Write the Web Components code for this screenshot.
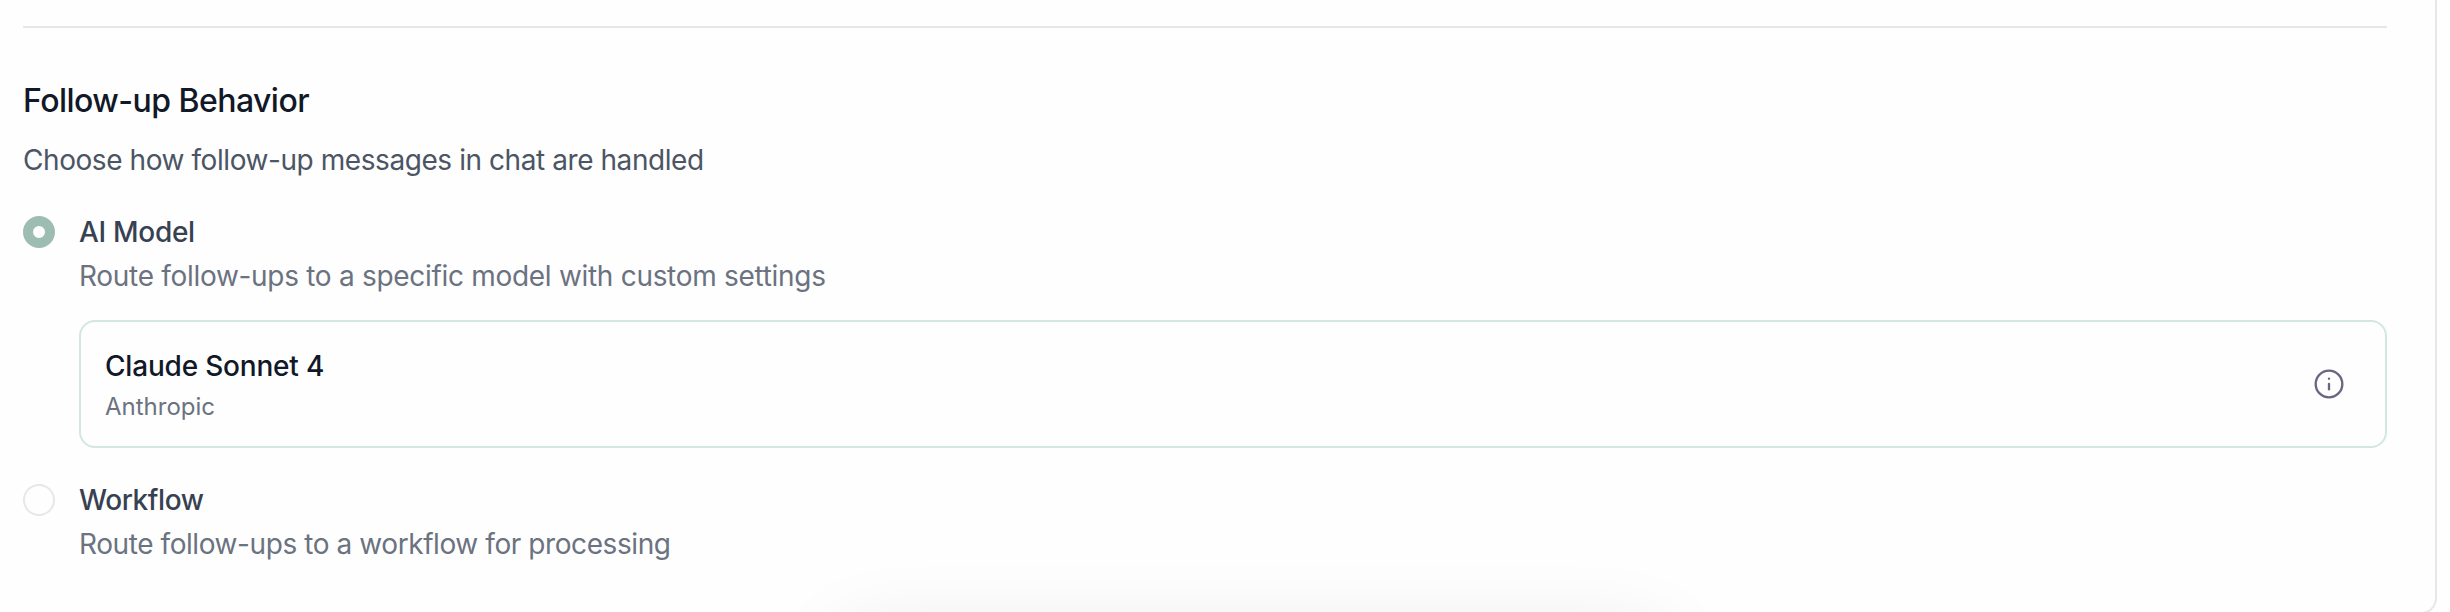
<!DOCTYPE html>
<html lang="en">
<head>
<meta charset="utf-8">
<title>Follow-up Behavior</title>
<style>
  html {
    overflow: hidden;
  }

  body {
    margin: 0;
    height: 612px;
    overflow: hidden;
    background: #fefefe;
    font-family: Inter, "Liberation Sans", sans-serif;
    --color-line: #e5e7eb;
    --color-accent: #9dbdb3;
    --color-accent-soft: #d3e6df;
    --color-title: #111827;
    --color-label: #374151;
    --color-text: #4b5563;
    --color-muted: #6b7280;
    --color-icon: #6b6584;
  }

  [data-key="model"] {
    --label-tracking: -0.3px;
    --description-tracking: -0.3px;
  }

  [data-key="workflow"] {
    --label-tracking: -0.42px;
    --description-tracking: -0.42px;
  }
</style>
</head>
<body>
<settings-panel>
  <settings-section heading="Follow-up Behavior" description="Choose how follow-up messages in chat are handled">
    <radio-option data-key="model" checked label="AI Model" description="Route follow-ups to a specific model with custom settings">
      <model-card name="Claude Sonnet 4" provider="Anthropic"></model-card>
    </radio-option>
    <radio-option data-key="workflow" label="Workflow" description="Route follow-ups to a workflow for processing"></radio-option>
  </settings-section>
</settings-panel>
<floating-shadow></floating-shadow>

<script>
class SettingsPanel extends HTMLElement {
  constructor() {
    super();

    this.attachShadow({ mode: 'open' });

    this.shadowRoot.innerHTML = `
      <style>
        :host {
          display: block;
          box-sizing: border-box;
          width: 2437px;
          height: 614px;
          padding: 26px 48px 0 23px;
          border: solid var(--color-line);
          border-width: 0 2px 2px 0;
          border-bottom-right-radius: 16px;
        }
      </style>
      <slot></slot>
    `;
  }
}

customElements.define('settings-panel', SettingsPanel);

class SettingsSection extends HTMLElement {
  constructor() {
    super();

    this.attachShadow({ mode: 'open' });

    this.shadowRoot.innerHTML = `
      <style>
        :host {
          display: block;
          padding-top: 49px;
          border-top: 2px solid var(--color-line);
        }
        h3 {
          margin: 0;
          font-size: 32px;
          font-weight: 500;
          line-height: 48px;
          letter-spacing: -0.54px;
          color: var(--color-title);
        }
        p {
          margin: 15px 0 0;
          font-size: 28px;
          line-height: 40px;
          letter-spacing: -0.43px;
          color: var(--color-text);
        }
        .options {
          display: flex;
          flex-direction: column;
          gap: 32px;
          margin-top: 32px;
        }
      </style>
      <h3></h3>
      <p></p>
      <div class="options"><slot></slot></div>
    `;
  }

  connectedCallback() {
    this.shadowRoot.querySelector('h3').textContent = this.getAttribute('heading');
    this.shadowRoot.querySelector('p').textContent = this.getAttribute('description');
  }
}

customElements.define('settings-section', SettingsSection);

class RadioOption extends HTMLElement {
  constructor() {
    super();

    this.attachShadow({ mode: 'open' });

    this.shadowRoot.innerHTML = `
      <style>
        :host {
          display: flex;
          align-items: flex-start;
          gap: 24px;
        }
        .radio {
          box-sizing: border-box;
          flex: none;
          width: 32px;
          height: 32px;
          margin-top: 4px;
          border: 2px solid var(--color-line);
          border-radius: 50%;
        }
        :host([checked]) .radio {
          border: 10px solid var(--color-accent);
        }
        .content {
          flex: 1;
        }
        .label,
        .description {
          font-size: 28px;
          line-height: 40px;
        }
        .label {
          font-weight: 500;
          letter-spacing: var(--label-tracking);
          color: var(--color-label);
        }
        .description {
          margin-top: 4px;
          letter-spacing: var(--description-tracking);
          color: var(--color-muted);
        }
        ::slotted(*) {
          margin-top: 24px;
        }
      </style>
      <div class="radio"></div>
      <div class="content">
        <div class="label"></div>
        <div class="description"></div>
        <slot></slot>
      </div>
    `;
  }

  connectedCallback() {
    this.shadowRoot.querySelector('.label').textContent = this.getAttribute('label');
    this.shadowRoot.querySelector('.description').textContent = this.getAttribute('description');
    this.shadowRoot.querySelector('.radio').addEventListener('click', this.selectHandler);
  }

  selectHandler = () => {
    this.parentElement.querySelectorAll('radio-option').forEach((option) => {
      option.toggleAttribute('checked', option === this);
    });
  };
}

customElements.define('radio-option', RadioOption);

class InfoIcon extends HTMLElement {
  constructor() {
    super();

    this.attachShadow({ mode: 'open' });

    this.shadowRoot.innerHTML = `
      <style>
        :host {
          display: block;
          width: 32px;
          height: 32px;
          color: var(--color-icon);
        }
        svg {
          display: block;
        }
      </style>
      <svg width="32" height="32" viewBox="0 0 24 24" fill="none" stroke="currentColor"
        stroke-width="1.75" stroke-linecap="round" stroke-linejoin="round">
        <circle cx="12" cy="12" r="10"/>
        <path d="M12 16v-4"/>
        <path d="M12 8h.01"/>
      </svg>
    `;
  }
}

customElements.define('info-icon', InfoIcon);

class ModelCard extends HTMLElement {
  constructor() {
    super();

    this.attachShadow({ mode: 'open' });

    this.shadowRoot.innerHTML = `
      <style>
        :host {
          display: flex;
          align-items: center;
          justify-content: space-between;
          box-sizing: border-box;
          height: 128px;
          padding: 0 40px 0 24px;
          border: 2px solid var(--color-accent-soft);
          border-radius: 16px;
        }
        .name {
          font-size: 28px;
          font-weight: 500;
          line-height: 40px;
          letter-spacing: -0.2px;
          color: var(--color-title);
        }
        .provider {
          margin: 5px 0 -1px;
          font-size: 24px;
          line-height: 32px;
          color: var(--color-muted);
        }
      </style>
      <div>
        <div class="name"></div>
        <div class="provider"></div>
      </div>
      <info-icon></info-icon>
    `;
  }

  connectedCallback() {
    this.shadowRoot.querySelector('.name').textContent = this.getAttribute('name');
    this.shadowRoot.querySelector('.provider').textContent = this.getAttribute('provider');
  }
}

customElements.define('model-card', ModelCard);

// shadow cast by the bar that sits just under the visible area
class FloatingShadow extends HTMLElement {
  constructor() {
    super();

    this.attachShadow({ mode: 'open' });

    this.shadowRoot.innerHTML = `
      <style>
        :host {
          position: absolute;
          top: 635px;
          left: 840px;
          width: 825px;
          height: 100px;
          border-radius: 24px;
          box-shadow: 0 0 80px rgba(0, 0, 0, 0.1);
          pointer-events: none;
        }
      </style>
    `;
  }
}

customElements.define('floating-shadow', FloatingShadow);
</script>
</body>
</html>
